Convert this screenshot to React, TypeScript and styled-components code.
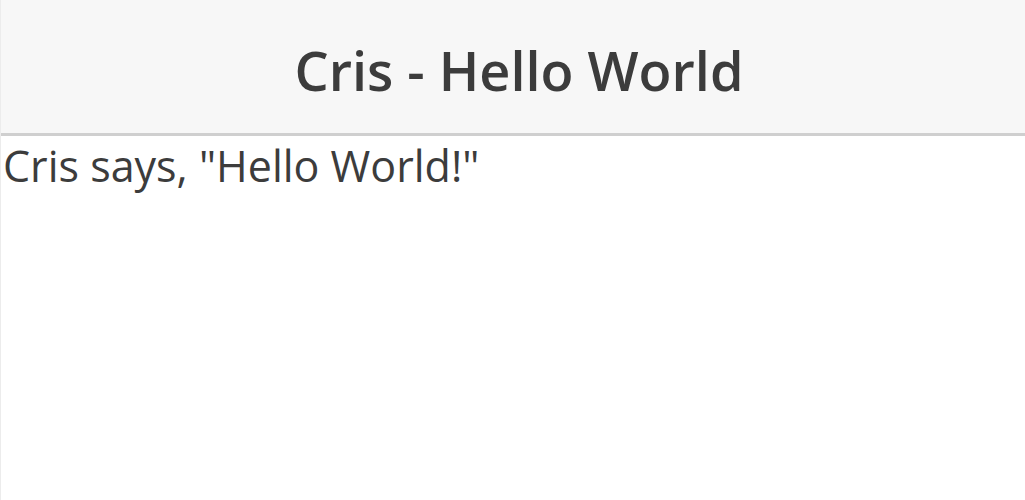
import React from "react";
import styled, { createGlobalStyle } from "styled-components";

const Global = createGlobalStyle`
  html, body { margin: 0; padding: 0; background: #ffffff; }
  body { font-family: "Open Sans", "Liberation Sans", sans-serif; color: #333333; }
`;

const Page = styled.div`
  height: 500px;
  border-left: 1px solid #ececec;
  display: flex;
  flex-direction: column;
`;

const Header = styled.header`
  height: 136px;
  flex-shrink: 0;
  background: #f7f7f7;
  border-bottom: 3px solid #cfcfcf;
  display: flex;
  align-items: center;
  justify-content: center;
  padding-top: 6px;
  box-sizing: border-box;
`;

const Title = styled.h1`
  margin: 0;
  font-size: 54px;
  font-weight: 600;
  color: #3c3c3c;
  padding-left: 12px;
`;

const Body = styled.p`
  margin: 0;
  padding: 0 0 0 2px;
  font-size: 43px;
  color: #3c3c3c;
`;

export default function App() {
  return (
    <>
      <Global />
      <Page>
        <Header>
          <Title>Cris - Hello World</Title>
        </Header>
        <Body>Cris says, "Hello World!"</Body>
      </Page>
    </>
  );
}
